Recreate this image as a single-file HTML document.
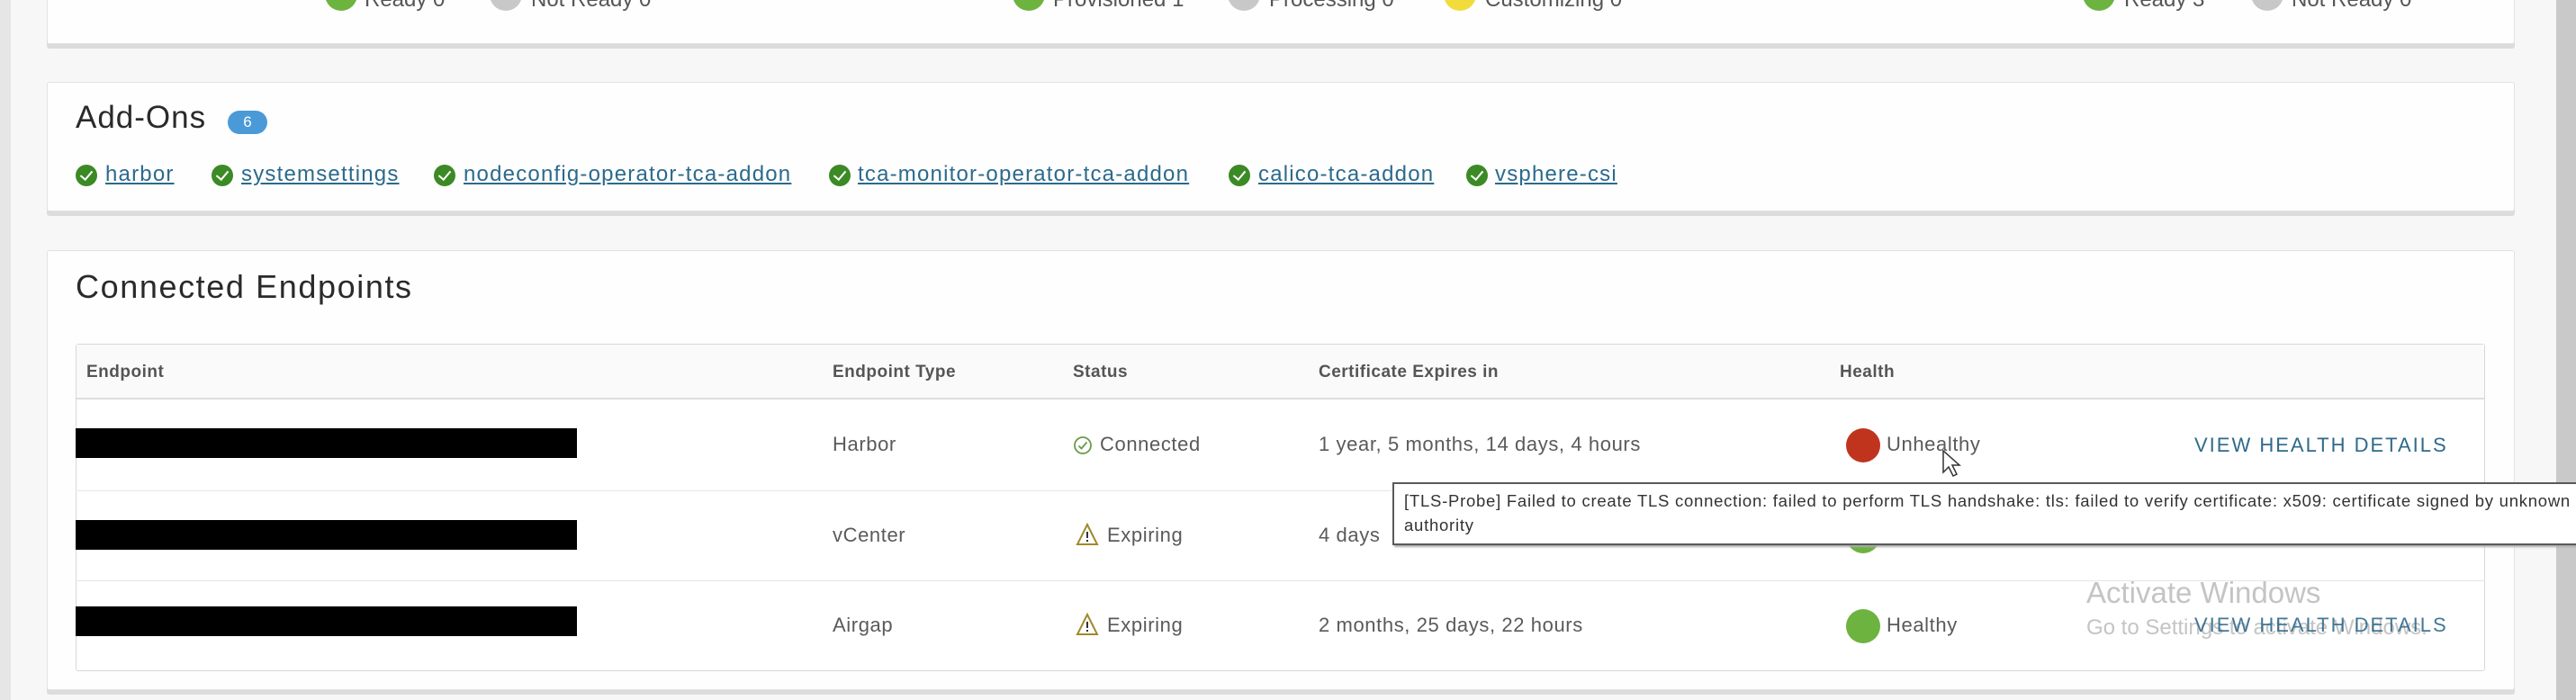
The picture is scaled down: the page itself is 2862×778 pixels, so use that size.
<!DOCTYPE html>
<html><head><meta charset="utf-8"><style>
*{margin:0;padding:0;box-sizing:border-box}
body{width:2862px;height:778px;overflow:hidden;background:#f7f7f7;font-family:"Liberation Sans",sans-serif;position:relative;color:#565656}
.abs{position:absolute}
.card{position:absolute;left:52px;width:2742px;background:#fefefe;border:1px solid #e2e2e2;border-radius:3px;box-shadow:0 5px 0 #dcdcdc}
.dot{position:absolute;width:36px;height:36px;border-radius:50%}
.t{position:absolute;white-space:nowrap}
.chk{position:absolute;width:24px;height:24px;border-radius:50%;background:#3c8a25}
.chk:after{content:"";position:absolute;left:8px;top:4px;width:6px;height:11px;border:solid #fff;border-width:0 2px 2px 0;transform:rotate(40deg)}
.lnk{position:absolute;font-size:24px;letter-spacing:1.2px;color:#2b6a8c;text-decoration:underline;white-space:nowrap;top:180px}
.hd{position:absolute;top:403px;font-size:19px;letter-spacing:.5px;color:#555;font-weight:bold}
.cell{position:absolute;font-size:22px;letter-spacing:.6px;color:#5a5a5a;white-space:nowrap}
.bar{position:absolute;left:84px;width:557px;height:33px;background:#000}
.row{position:absolute;left:84px;width:2677px;height:1px;background:#e6e6e6}
.vh{position:absolute;left:2438px;font-size:22px;color:#2e6a8a;letter-spacing:2px;white-space:nowrap}
</style></head><body>
<div class="abs" style="left:0;top:0;width:12px;height:778px;background:#e6e6e6"></div>
<div class="abs" style="left:2840px;top:0;width:22px;height:778px;background:#c9c9c9"></div>

<div class="card" style="top:-10px;height:59px"></div>
<div class="dot" style="left:361px;top:-24px;background:#6db33f"></div>
<div class="t" style="left:405px;top:-14px;font-size:24px">Ready 0</div>
<div class="dot" style="left:544px;top:-24px;background:#c8c8c8"></div>
<div class="t" style="left:590px;top:-14px;font-size:24px">Not Ready 0</div>
<div class="dot" style="left:1125px;top:-24px;background:#6db33f"></div>
<div class="t" style="left:1170px;top:-14px;font-size:24px">Provisioned 1</div>
<div class="dot" style="left:1364px;top:-24px;background:#c8c8c8"></div>
<div class="t" style="left:1410px;top:-14px;font-size:24px">Processing 0</div>
<div class="dot" style="left:1604px;top:-24px;background:#f2dc3c"></div>
<div class="t" style="left:1650px;top:-14px;font-size:24px">Customizing 0</div>
<div class="dot" style="left:2314px;top:-24px;background:#6db33f"></div>
<div class="t" style="left:2360px;top:-14px;font-size:24px">Ready 3</div>
<div class="dot" style="left:2501px;top:-24px;background:#c8c8c8"></div>
<div class="t" style="left:2546px;top:-14px;font-size:24px">Not Ready 0</div>

<div class="card" style="top:91px;height:144px"></div>
<div class="t" style="left:84px;top:111px;font-size:35px;letter-spacing:1px;color:#2a2a2a">Add-Ons</div>
<div class="abs" style="left:253px;top:123px;width:44px;height:26px;border-radius:13px;background:#4a9ad8;color:#fff;font-size:17px;text-align:center;line-height:26px">6</div>
<div class="chk" style="left:84px;top:183px"></div><div class="lnk" style="left:117px">harbor</div>
<div class="chk" style="left:235px;top:183px"></div><div class="lnk" style="left:268px">systemsettings</div>
<div class="chk" style="left:482px;top:183px"></div><div class="lnk" style="left:515px">nodeconfig-operator-tca-addon</div>
<div class="chk" style="left:921px;top:183px"></div><div class="lnk" style="left:953px">tca-monitor-operator-tca-addon</div>
<div class="chk" style="left:1365px;top:183px"></div><div class="lnk" style="left:1398px">calico-tca-addon</div>
<div class="chk" style="left:1629px;top:183px"></div><div class="lnk" style="left:1661px">vsphere-csi</div>

<div class="card" style="top:278px;height:489px"></div>
<div class="t" style="left:84px;top:298px;font-size:36px;letter-spacing:1.6px;color:#2a2a2a">Connected Endpoints</div>
<div class="abs" style="left:84px;top:382px;width:2677px;height:364px;border:1px solid #d8d8d8;border-radius:3px;background:#fff"></div>
<div class="abs" style="left:85px;top:383px;width:2675px;height:61px;background:#fafafa;border-bottom:2px solid #dedede"></div>
<div class="hd" style="left:96px">Endpoint</div>
<div class="hd" style="left:925px">Endpoint Type</div>
<div class="hd" style="left:1192px">Status</div>
<div class="hd" style="left:1465px">Certificate Expires in</div>
<div class="hd" style="left:2044px">Health</div>
<div class="row" style="top:545px"></div>
<div class="row" style="top:645px"></div>

<div class="bar" style="top:476px"></div>
<div class="bar" style="top:578px"></div>
<div class="bar" style="top:674px"></div>

<div class="cell" style="left:925px;top:481px">Harbor</div>
<div class="cell" style="left:925px;top:582px">vCenter</div>
<div class="cell" style="left:925px;top:682px">Airgap</div>

<svg class="abs" style="left:1192px;top:483px" width="22" height="24" viewBox="0 0 22 24"><circle cx="11" cy="12" r="9" fill="none" stroke="#6a9a4a" stroke-width="1.8"/><path d="M6.5 12.5l3 3 6-7" fill="none" stroke="#6a9a4a" stroke-width="1.8"/></svg>
<div class="cell" style="left:1222px;top:481px">Connected</div>
<svg class="abs" style="left:1195px;top:581px" width="26" height="26" viewBox="0 0 26 26"><path d="M13 2L24 24H2Z" fill="none" stroke="#a08a2a" stroke-width="2"/><path d="M13 10v7M13 19v2" stroke="#333" stroke-width="2"/></svg>
<div class="cell" style="left:1230px;top:582px">Expiring</div>
<svg class="abs" style="left:1195px;top:681px" width="26" height="26" viewBox="0 0 26 26"><path d="M13 2L24 24H2Z" fill="none" stroke="#a08a2a" stroke-width="2"/><path d="M13 10v7M13 19v2" stroke="#333" stroke-width="2"/></svg>
<div class="cell" style="left:1230px;top:682px">Expiring</div>

<div class="cell" style="left:1465px;top:481px">1 year, 5 months, 14 days, 4 hours</div>
<div class="cell" style="left:1465px;top:582px">4 days</div>
<div class="cell" style="left:1465px;top:682px">2 months, 25 days, 22 hours</div>

<div class="dot" style="left:2051px;top:476px;width:38px;height:38px;background:#c0341d"></div>
<div class="cell" style="left:2096px;top:481px">Unhealthy</div>
<div class="dot" style="left:2051px;top:577px;width:38px;height:38px;background:#6db33f"></div>
<div class="dot" style="left:2051px;top:677px;width:38px;height:38px;background:#6db33f"></div>
<div class="cell" style="left:2096px;top:682px">Healthy</div>

<div class="vh" style="top:482px">VIEW HEALTH DETAILS</div>
<div class="t" style="left:2318px;top:640px;font-size:33px;color:#c4c4c4">Activate Windows</div>
<div class="t" style="left:2318px;top:684px;font-size:24px;color:#c4c4c4">Go to Settings to activate Windows.</div>
<div class="vh" style="top:682px;opacity:.9">VIEW HEALTH DETAILS</div>

<svg class="abs" style="left:2157px;top:499px" width="22" height="32" viewBox="0 0 22 32"><path d="M2 2v24l6-6 5 10 4-2-5-10h8Z" fill="#fff" stroke="#333" stroke-width="1.5"/></svg>

<div class="abs" style="left:1547px;top:536px;width:1330px;height:70px;background:#fff;border:2px solid #5a5a5a;box-shadow:2px 2px 2px #aaa"></div>
<div class="t" style="left:1560px;top:546px;font-size:18.5px;letter-spacing:.75px;color:#333">[TLS-Probe] Failed to create TLS connection: failed to perform TLS handshake: tls: failed to verify certificate: x509: certificate signed by unknown</div>
<div class="t" style="left:1560px;top:573px;font-size:18.5px;letter-spacing:.75px;color:#333">authority</div>
</body></html>
